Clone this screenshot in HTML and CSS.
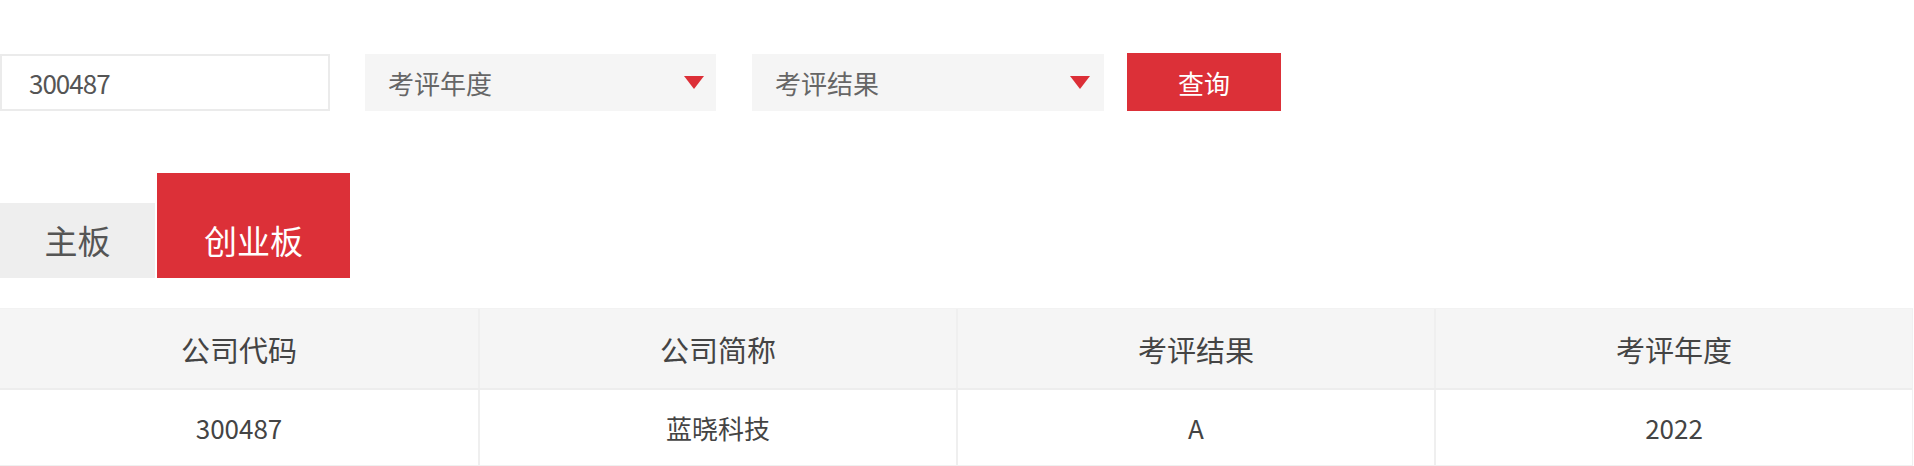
FILE: index.html
```html
<!DOCTYPE html>
<html lang="zh-CN">
<head>
<meta charset="utf-8">
<title>考评结果查询</title>
<link rel="stylesheet" href="styles.css">
</head>
<body>
<div class="page">
  <form class="filters">
    <div class="input">300487</div>
    <div class="select select-year"><span>考评年度</span><i class="caret"></i></div>
    <div class="select select-result"><span>考评结果</span><i class="caret"></i></div>
    <div class="btn">查询</div>
  </form>
  <div class="tabs">
    <div class="tab">主板</div>
    <div class="tab active">创业板</div>
  </div>
  <div class="table">
    <div class="row head">
      <div class="cell">公司代码</div>
      <div class="cell">公司简称</div>
      <div class="cell">考评结果</div>
      <div class="cell">考评年度</div>
    </div>
    <div class="row body">
      <div class="cell">300487</div>
      <div class="cell">蓝晓科技</div>
      <div class="cell">A</div>
      <div class="cell">2022</div>
    </div>
  </div>
</div>
</body>
</html>
```
FILE: styles.css
```css
* { box-sizing: border-box; }
html, body { margin: 0; padding: 0; background: #fff; }
body {
  font-family: "Noto Sans CJK SC", "Noto Sans", "Liberation Sans", sans-serif;
  color: #444;
  width: 1914px;
  height: 466px;
  overflow: hidden;
}
.page { padding-top: 53px; }
.filters {
  display: flex;
  align-items: center;
  height: 58px;
  margin: 0;
}
.input {
  width: 330px;
  height: 57px;
  border: 2px solid #ebebeb;
  padding-left: 27px;
  display: flex;
  align-items: center;
  font-size: 26px;
  color: #555;
  letter-spacing: -1px;
}
.select {
  height: 57px;
  background: #f5f5f5;
  display: flex;
  align-items: center;
  justify-content: space-between;
  padding: 0 12px 0 23px;
  font-size: 26px;
  color: #666;
}
.select-year { width: 351px; margin-left: 35px; }
.select-result { width: 352px; margin-left: 36px; padding-right: 14px; }
.caret {
  width: 0; height: 0;
  border-left: 10px solid transparent;
  border-right: 10px solid transparent;
  border-top: 13px solid #dc2f37;
}
.btn {
  width: 154px;
  height: 58px;
  margin-left: 23px;
  background: #dc3038;
  color: #fff;
  font-size: 26px;
  display: flex;
  align-items: center;
  justify-content: center;
}
.tabs {
  display: flex;
  align-items: flex-end;
  gap: 2px;
  margin-top: 62px;
  height: 105px;
}
.tab {
  height: 75px;
  width: 155px;
  background: #eeeeee;
  color: #555;
  font-size: 33px;
  display: flex;
  align-items: center;
  justify-content: center;
  padding-bottom: 2px;
}
.tab.active {
  width: 193px;
  height: 105px;
  padding-top: 30px;
  background: #dc3038;
  color: #fff;
}
.table {
  margin-top: 30px;
  width: 1913px;
  border-top: 1px solid #f2f2f2;
  border-right: 1px solid #f0f0f0;
}
.row {
  display: grid;
  grid-template-columns: repeat(4, 1fr);
}
.row.head { height: 81px; background: #f5f5f5; border-bottom: 2px solid #ededed; }
.row.body { height: 76px; background: #fff; border-bottom: 1px solid #f0f0f0; }
.cell {
  display: flex;
  align-items: center;
  justify-content: center;
  border-left: 2px solid #efefef;
  color: #444;
}
.cell:first-child { border-left: none; }
.head .cell { font-size: 29px; color: #444; }
.body .cell { font-size: 26px; color: #444; }
```
